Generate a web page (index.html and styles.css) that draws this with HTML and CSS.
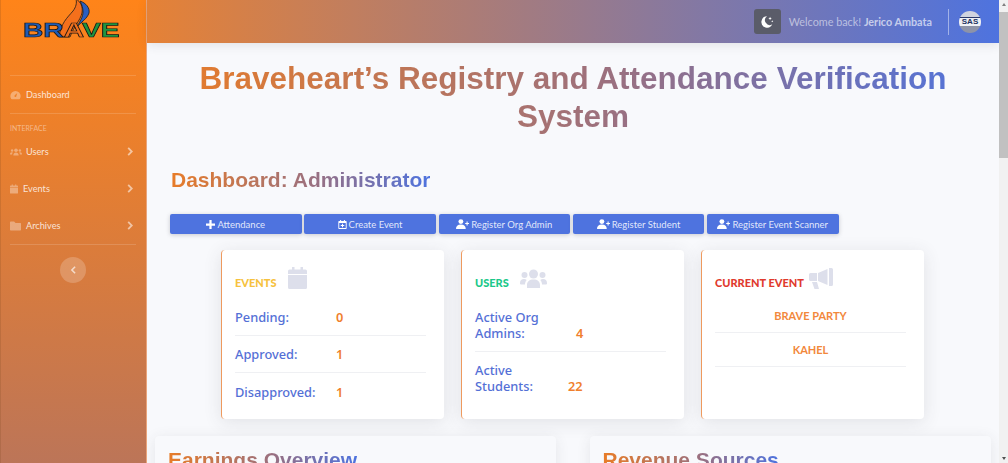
FILE: index.html
```html
<!DOCTYPE html>
<html lang="en">
<head>
  <meta charset="UTF-8">
  <meta name="viewport" content="width=device-width, initial-scale=1.0">
  <title>BRAVE Dashboard</title>
  <link rel="stylesheet" href="styles.css">
</head>
<body>
  <div class="page">
    <aside class="sidebar">
      <div class="brand">
        <svg class="brand-flame" viewBox="0 0 40 40" width="40" height="40">
          <path d="M1 38C3 24 9 19 15 12 18 8 19 4 18 0c5 3 7 8 6 14-2 8-8 13-12 24z" fill="#f4701c" stroke="#1a1a1a" stroke-width=".8"/>
          <path d="M22 2c6 2 10 7 9 12-2 6-8 9-12 14 3-6 6-10 6-15 0-4-1-7-3-11z" fill="#2a5fc0" stroke="#1a1a1a" stroke-width=".8"/>
        </svg>
        <span class="brand-text"><span class="b-blue">BR</span><span class="b-orange">A</span><span class="b-green">VE</span></span>
      </div>
      <hr class="side-rule first">
      <a class="side-link"><svg class="side-icon" viewBox="0 0 16 14"><path d="M8 1a7.500 7.500 0 0 0-7.500 7.500c0 1.500.4 2.900 1.100 4 .2.300.5.500.9.500h11c.4 0 .7-.2.900-.5.700-1.100 1.100-2.500 1.100-4A7.500 7.500 0 0 0 8 1zm0 9a1.500 1.500 0 0 1-1.100-2.500L10.500 4 9.300 8.600A1.500 1.500 0 0 1 8 10z"/></svg>Dashboard</a>
      <hr class="side-rule">
      <div class="side-heading">INTERFACE</div>
      <a class="side-link"><svg class="side-icon wide" viewBox="0 0 20 14"><circle cx="10" cy="4" r="3"/><circle cx="3.500" cy="4.500" r="2"/><circle cx="16.500" cy="4.500" r="2"/><path d="M5.500 13c0-3 2-5 4.500-5s4.500 2 4.500 5zM0 11c0-2 1-3.500 3-3.500.7 0 1.200.2 1.600.5-.8 1-1.100 2-1.100 3zM20 11c0-2-1-3.500-3-3.500-.7 0-1.200.2-1.600.5.800 1 1.100 2 1.100 3z"/></svg>Users<svg class="chev" viewBox="0 0 6 10"><path d="M1 1l4 4-4 4" fill="none" stroke-width="2"/></svg></a>
      <a class="side-link tight"><svg class="side-icon small" viewBox="0 0 14 16"><path d="M3 0h2v2h4V0h2v2h2a1 1 0 0 1 1 1v2H0V3a1 1 0 0 1 1-1h2zM0 6h14v9a1 1 0 0 1-1 1H1a1 1 0 0 1-1-1z"/></svg>Events<svg class="chev" viewBox="0 0 6 10"><path d="M1 1l4 4-4 4" fill="none" stroke-width="2"/></svg></a>
      <a class="side-link"><svg class="side-icon" viewBox="0 0 16 13"><path d="M1 0h5l2 2h7a1 1 0 0 1 1 1v9a1 1 0 0 1-1 1H1a1 1 0 0 1-1-1V1a1 1 0 0 1 1-1z"/></svg>Archives<svg class="chev" viewBox="0 0 6 10"><path d="M1 1l4 4-4 4" fill="none" stroke-width="2"/></svg></a>
      <hr class="side-rule">
      <button class="side-toggle"><svg viewBox="0 0 6 10" width="5" height="8"><path d="M5 1L1 5l4 4" fill="none" stroke="rgba(255,255,255,.65)" stroke-width="2"/></svg></button>
    </aside>

    <div class="main">
      <header class="topbar">
        <button class="moon-btn">
          <svg viewBox="0 0 16 16" width="14" height="14"><path d="M8 1.500a6.500 6.500 0 1 0 6 9.200 5.500 5.500 0 0 1-6-9.200z" fill="#fff"/><path d="M11.500 2l.6 1.400 1.400.6-1.400.6-.6 1.400-.6-1.400-1.400-.6 1.400-.6zM14 6l.4.800.8.400-.8.400-.4.800-.4-.8-.8-.4.800-.4z" fill="#fff"/></svg>
        </button>
        <span class="welcome">Welcome back! <strong>Jerico Ambata</strong></span>
        <span class="top-rule"></span>
        <span class="avatar"><span class="avatar-band">SAS</span></span>
      </header>

      <main class="content">
        <h1 class="grad-text app-title">Braveheart’s Registry and Attendance Verification System</h1>
        <h2 class="dash-title"><span class="grad-text">Dashboard: Administrator</span></h2>

        <div class="actions">
          <a class="act-btn"><svg viewBox="0 0 12 12" class="act-icon"><path d="M4.500 0h3v4.500H12v3H7.500V12h-3V7.500H0v-3h4.500z"/></svg>Attendance</a>
          <a class="act-btn"><svg viewBox="0 0 12 13" class="act-icon"><path fill-rule="evenodd" d="M2.500 0h1.500v1.500h4V0h1.500v1.500H11a1 1 0 0 1 1 1V12a1 1 0 0 1-1 1H1a1 1 0 0 1-1-1V2.500a1 1 0 0 1 1-1h1.500zM1.300 4.500V11.700h9.400V4.500zM5.300 5.500h1.400v1.800h1.800v1.400H6.700v1.800H5.300V8.700H3.500V7.300h1.800z"/></svg>Create Event</a>
          <a class="act-btn"><svg viewBox="0 0 16 12" class="act-icon wide"><circle cx="6" cy="3" r="3"/><path d="M0 12c0-3.500 2-5.500 6-5.500s6 2 6 5.500zM13 3h1.300v1.700H16V6h-1.700v1.700H13V6h-1.700V4.700H13z"/></svg>Register Org Admin</a>
          <a class="act-btn"><svg viewBox="0 0 16 12" class="act-icon wide"><circle cx="6" cy="3" r="3"/><path d="M0 12c0-3.500 2-5.500 6-5.500s6 2 6 5.500zM13 3h1.300v1.700H16V6h-1.700v1.700H13V6h-1.700V4.700H13z"/></svg>Register Student</a>
          <a class="act-btn"><svg viewBox="0 0 16 12" class="act-icon wide"><circle cx="6" cy="3" r="3"/><path d="M0 12c0-3.500 2-5.500 6-5.500s6 2 6 5.500zM13 3h1.300v1.700H16V6h-1.700v1.700H13V6h-1.700V4.700H13z"/></svg>Register Event Scanner</a>
        </div>

        <div class="stats">
          <section class="stat-card">
            <div class="stat-head"><span class="stat-label c-yellow">EVENTS</span>
              <svg class="stat-icon" viewBox="0 0 19 22"><path d="M4 0h2.500v2.500h6V0H15v2.500h2.500A1.500 1.500 0 0 1 19 4v3H0V4a1.500 1.500 0 0 1 1.500-1.500H4zM0 8h19v12.500a1.500 1.500 0 0 1-1.500 1.500h-16A1.500 1.500 0 0 1 0 20.500z"/></svg>
            </div>
            <div class="stat-row"><span class="stat-name">Pending:</span><span class="stat-num">0</span></div>
            <div class="stat-row"><span class="stat-name">Approved:</span><span class="stat-num">1</span></div>
            <div class="stat-row"><span class="stat-name">Disapproved:</span><span class="stat-num">1</span></div>
          </section>
          <section class="stat-card">
            <div class="stat-head"><span class="stat-label c-green">USERS</span>
              <svg class="stat-icon users" viewBox="0 0 27 19"><circle cx="13.500" cy="5" r="4.500"/><circle cx="4.500" cy="6" r="3"/><circle cx="22.500" cy="6" r="3"/><path d="M7 19v-3c0-3.500 2.500-5.500 6.500-5.500S20 12.500 20 16v3zM0 14c0-2.500 1.500-4 4-4 1 0 2 .3 2.700 1C5.500 12.300 5 14 5 15.500H1a1 1 0 0 1-1-1.500zM27 14c0-2.500-1.500-4-4-4-1 0-2 .3-2.700 1 1.200 1.300 1.700 3 1.700 4.500h4a1 1 0 0 0 1-1.500z"/></svg>
            </div>
            <div class="stat-row wrap"><span class="stat-name">Active Org Admins:</span><span class="stat-num">4</span></div>
            <div class="stat-row wrap"><span class="stat-name">Active Students:</span><span class="stat-num">22</span></div>
          </section>
          <section class="stat-card">
            <div class="stat-head"><span class="stat-label c-red">CURRENT EVENT</span>
              <svg class="stat-icon horn" viewBox="0 0 24 21"><path d="M20 0h2.500A1.500 1.500 0 0 1 24 1.500v15a1.500 1.500 0 0 1-1.500 1.500H20zM18.500 1v16L9 13v-8zM0 6.500A1.500 1.500 0 0 1 1.500 5H8v8H1.500A1.500 1.500 0 0 1 0 11.500zM3 14h5l2 7H5.500z"/></svg>
            </div>
            <div class="event-row">BRAVE PARTY</div>
            <div class="event-row">KAHEL</div>
          </section>
        </div>

        <div class="charts">
          <section class="chart-card"><h3><span class="grad-text">Earnings Overview</span></h3></section>
          <section class="chart-card"><h3><span class="grad-text">Revenue Sources</span></h3></section>
        </div>
      </main>
    </div>

    <div class="scrollbar">
      <span class="arrow up"></span>
      <span class="thumb"></span>
      <span class="arrow down"></span>
    </div>
  </div>
</body>
</html>
```

FILE: styles.css
```css
html, body { margin: 0; padding: 0; height: 100%; overflow: hidden; }
body { font-family: "Noto Sans", Lato, sans-serif; background: #f8f9fc; color: #4e73df; }

.page { display: flex; height: 463px; overflow: hidden; }

/* sidebar */
.sidebar { width: 146px; flex: none; display: flex; flex-direction: column; align-items: stretch; background: linear-gradient(180deg, #ff8419 0%, #bc7558 100%); border-right: 1px solid #e9a57c; box-shadow: inset 1px 0 rgba(120,70,30,.2); }
.brand { height: 75px; position: relative; }
.brand-flame { position: absolute; left: 58px; top: -1px; }
.brand-text { position: absolute; left: 23px; top: 19px; font: 900 20px "Liberation Sans", sans-serif; -webkit-text-stroke: .7px #151515; transform: scaleX(1.41); transform-origin: left; }
.b-blue { color: #1f5bb5; }
.b-orange { color: #f4701c; }
.b-green { color: #1f9440; }
.side-rule { width: 126px; margin: 0 auto; border: 0; border-top: 1px solid rgba(255,255,255,.15); }
.side-link { display: flex; align-items: center; height: 37px; padding-left: 10px; padding-right: 13px; font: 9.200px Lato, sans-serif; color: rgba(255,255,255,.8); }
.side-link.tight .side-icon { margin-right: 5px; }
.side-icon { width: 11px; height: 10px; margin-right: 5px; fill: rgba(255,255,255,.35); flex: none; }
.side-icon.wide { width: 12px; margin-right: 4px; }
.side-icon.small { width: 8px; height: 10px; }
.chev { width: 6px; height: 9px; margin-left: auto; stroke: rgba(255,255,255,.55); }
.side-heading { font: 7px Lato, sans-serif; color: rgba(255,255,255,.45); padding: 10px 0 0 10px; height: 6px; margin-bottom: 3px; }
.side-toggle { width: 26px; height: 26px; margin: 12px auto 0; padding: 0; border: 0; border-radius: 50%; background: rgba(255,255,255,.2); display: flex; align-items: center; justify-content: center; }

/* topbar */
.main { flex: 1; min-width: 0; display: flex; flex-direction: column; }
.topbar { height: 43px; flex: none; display: flex; align-items: center; justify-content: flex-end; padding-right: 18px; background: linear-gradient(90deg, #ff8419 -17%, #4e73df 100%); box-shadow: 0 2px 10px rgba(58,59,69,.12); }
.moon-btn { width: 27px; height: 25px; padding: 0; margin: 0 8px 0 0; border: 0; border-radius: 3px; background: #5a5c69; display: flex; align-items: center; justify-content: center; }
.welcome { font: 10.800px Lato, sans-serif; color: rgba(255,255,255,.55); }
.welcome strong { color: rgba(255,255,255,.65); }
.top-rule { width: 1px; height: 26px; margin: 0 10px 0 16px; background: rgba(255,255,255,.45); }
.avatar { width: 22px; height: 22px; border-radius: 50%; background: linear-gradient(180deg, #cfd3de 0 26%, #2b3a6b 26% 32%, #eef0f5 32% 70%, #8d93a8 70%); box-sizing: border-box; display: flex; align-items: center; justify-content: center; }
.avatar-band { font: 700 8px "Liberation Sans", sans-serif; color: #23325e; }

/* content */
.content { flex: 1; min-height: 0; padding: 0 8px; overflow: hidden; }
.grad-text { background: linear-gradient(90deg, #e87c28, #9a7080 55%, #4e73df); -webkit-background-clip: text; background-clip: text; color: transparent; font-family: "Liberation Sans", sans-serif; font-weight: 700; }
.app-title { margin: 16px 0 0; font-size: 31.500px; line-height: 38.400px; text-align: center; padding: 0 30px; }
.dash-title { margin: 30px 0 0 16px; font-size: 21px; line-height: 26.400px; }

.actions { display: flex; gap: 2.750px; margin: 21px 0 0 15px; }
.act-btn { height: 20px; width: 131.500px; flex: none; display: flex; align-items: center; justify-content: center; background: #4e73df; color: rgba(255,255,255,.85); font: 9.500px Lato, sans-serif; border-radius: 2px; box-shadow: 0 1px 4px rgba(58,59,69,.25); }
.act-icon { width: 9px; height: 9px; margin-right: 2px; fill: #fff; flex: none; }
.act-icon.wide { width: 13px; height: 10px; }

.stats { display: flex; gap: 17px; margin: 16px 0 0 66px; }
.stat-card { width: 223px; height: 169px; box-sizing: border-box; flex: none; padding: 18px 18px 0 13px; background: #fff; border-left: 1px solid #ee9a5e; border-radius: 4px; box-shadow: 0 3px 18px rgba(58,59,69,.12); }
.stat-head { display: flex; align-items: center; gap: 11px; height: 24px; margin-bottom: 7px; }
.stat-label { font: 900 11px Lato, sans-serif; margin-top: 4px; }
.c-yellow { color: #f6c23e; }
.c-green { color: #1cc88a; }
.c-red { color: #e03a2e; }
.stat-icon { width: 19px; height: 22px; margin-top: -4px; fill: #dddfeb; }
.stat-icon.users { width: 27px; height: 19px; margin-left: 0; }
.stat-icon.horn { width: 24px; height: 21px; margin-left: -6px; }
.stat-row { display: flex; align-items: center; box-sizing: border-box; border-bottom: 1px solid #eff0f3; height: 37px; font-size: 12.800px; font-weight: 500; color: #5470d6; }
.stat-row:last-child { border-bottom: 0; }
.stat-name { width: 101px; flex: none; }
.stat-num { color: #f07f2d; font-weight: 600; }
.stat-row.wrap { height: 53px; line-height: 16px; }
.stat-row.wrap:last-child { padding-bottom: 2px; }
.stat-row.wrap .stat-name { width: 76px; margin-right: 25px; }
.stat-row.wrap .stat-num { width: 9px; margin-top: 16px; }
.stat-row.wrap:last-child .stat-num { margin-left: -8px; width: 17px; }
.event-row { height: 34px; box-sizing: border-box; display: flex; align-items: center; justify-content: center; border-bottom: 1px solid #eff0f3; font: 700 11px Lato, sans-serif; color: #f2883c; }

.charts { display: flex; gap: 33.500px; margin-top: 17px; }
.chart-card { width: 401px; height: 80px; flex: none; padding: 10px 13px; box-sizing: border-box; background: #f8f9fc; border-radius: 4px; box-shadow: 0 2px 14px rgba(58,59,69,.1); }
.chart-card h3 { margin: 0; font-size: 21px; line-height: 26px; }

/* window scrollbar */
.scrollbar { width: 9px; flex: none; background: #f1f1f1; display: flex; flex-direction: column; align-items: center; }
.arrow { width: 0; height: 0; border-left: 2.500px solid transparent; border-right: 2.500px solid transparent; margin: 3px 0; }
.arrow.up { border-bottom: 3px solid #808080; }
.arrow.down { border-top: 3px solid #505050; margin-top: auto; }
.thumb { width: 9px; height: 146px; background: #c1c1c1; margin-top: 3px; }
```
